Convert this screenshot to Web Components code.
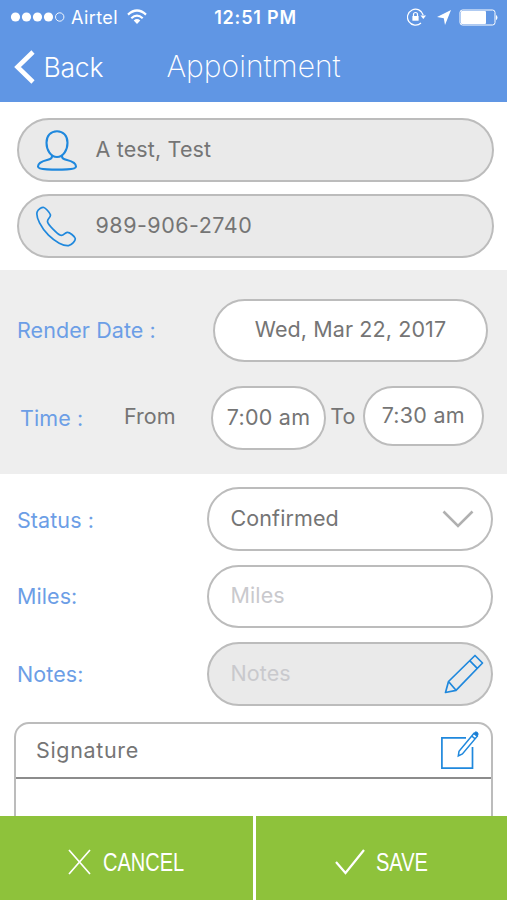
<!DOCTYPE html>
<html lang="en">
<head>
<meta charset="utf-8">
<title>Appointment</title>
<style>
  html, body { margin: 0; height: 100%; }
  body {
    overflow: hidden;
    font-family: Inter, "Liberation Sans", sans-serif;
    font-size: 21.5px;
    color: #757575;
    background: #fff;
  }
</style>
</head>
<body>
<appointment-page></appointment-page>

<script>
const icons = {
  person: `<svg width="42" height="42" viewBox="0 0 42 42" fill="none" stroke="#1f88dd" stroke-width="2.1" stroke-linejoin="round">
    <path d="M21 2.2C14.600 2.200 10.500 6.900 10.500 13.700C10.500 21 14.800 28 21 28C27.200 28 31.500 21 31.500 13.700C31.500 6.900 27.400 2.200 21 2.200Z"/>
    <path d="M16 26.400C16.400 29.700 14 30.300 11 31.100C5.800 32.400 2 34.200 2 37.600C2 39.300 4.800 40.200 11 40.400Q21 40.900 31 40.400C37.200 40.200 40 39.300 40 37.600C40 34.200 36.200 32.400 31 31.100C28 30.300 25.600 29.700 26 26.400"/></svg>`,
  phone: `<svg width="42" height="42" viewBox="0 0 42 42" fill="none" stroke="#1f88dd" stroke-width="1.7" stroke-linejoin="round">
    <path d="M1.200 6.700C2.200 4.200 5.600 2.100 7.900 2.500C9.500 2.800 13.300 7.300 14.300 9.500C15.600 12.400 10.700 13.600 11.600 17C12.400 20 21.500 29.200 24.600 30.200C27.600 31.100 28.500 27.700 31.200 27.300C33.600 27 38.700 31.400 39.200 33.400C39.700 35.600 35.800 40 32.600 40.600C27.900 41.400 19 36.700 12.500 30.200C5.500 23.200 -0.600 12.300 1.200 6.700Z"/></svg>`,
  chevron: `<svg width="32" height="20" viewBox="0 0 32 20" fill="none" stroke="#b0b0b0" stroke-width="2.600"><path d="M1.500 2.500L16 17L30.500 2.500"/></svg>`,
  pencil: `<svg width="40" height="40" viewBox="0 0 40 40" fill="none" stroke="#1f88dd" stroke-width="1.7" stroke-linejoin="round">
    <path d="M1.500 38.500L4.500 27.500L31 1.500L38.500 9L12 36.300L1.500 38.500ZM4.500 27.500L12 36.300M25.700 6.700L33.300 14.300"/></svg>`,
  compose: `<svg width="40" height="40" viewBox="0 0 40 40" fill="none" stroke="#1f88dd" stroke-width="1.700">
    <path d="M27 7.900H2.900V38.200H33.500V17"/>
    <path d="M34.800 3.500L20 21.300L19.300 26L23.400 23.900L38.300 6.200ZM32.700 6L36.200 8.800" stroke-width="1.500"/>
    <path d="M34.800 3.500Q36.500 1 38.300 2.300Q40 3.800 38.300 6.200Z" fill="#1f78cc" stroke-width="1"/></svg>`,
  back: `<svg width="22" height="34" viewBox="0 0 22 34" fill="none" stroke="#fff" stroke-width="4.600"><path d="M19 2L3.500 17L19 32"/></svg>`,
  cross: `<svg width="23" height="26" viewBox="0 0 23 26" fill="none" stroke="#fff" stroke-width="1.700"><path d="M1 1L22 25M22 1L1 25"/></svg>`,
  check: `<svg width="30" height="26" viewBox="0 0 30 26" fill="none" stroke="#fff" stroke-width="2.200"><path d="M1 13L10.500 24L29 1"/></svg>`
};

class UiIcon extends HTMLElement {
  connectedCallback() {
    this.attachShadow({ mode: 'open' });
    this.shadowRoot.innerHTML = `
      <style>
        :host { display: block; flex: none; }
        svg { display: block; }
      </style>
      ${icons[this.getAttribute('name')]}
    `;
  }
}

class StatusBar extends HTMLElement {
  connectedCallback() {
    this.attachShadow({ mode: 'open' });
    this.shadowRoot.innerHTML = `
      <style>
        :host {
          display: grid;
          grid-template-columns: 1fr auto 1fr;
          align-items: center;
          height: 34px;
          padding: 0 8px 0 10px;
          color: #fff;
          font-size: 18px;
        }
        .side { display: flex; align-items: center; }
        .right { justify-content: flex-end; }
        .carrier { margin: 0 9.500px 0 6px; letter-spacing: 0.4px; }
        .time { font-weight: 600; font-size: 18px; letter-spacing: 0.8px; padding-left: 2px; }
        svg { display: block; flex: none; }
      </style>
      <div class="side">
        <svg width="55" height="12" viewBox="0 0 55 12" fill="#fff">
          <circle cx="5.500" cy="6" r="4.600"/><circle cx="16.500" cy="6" r="4.600"/>
          <circle cx="27.500" cy="6" r="4.600"/><circle cx="38.500" cy="6" r="4.600"/>
          <circle cx="49.700" cy="6" r="4.200" fill="none" stroke="#fff" stroke-width="0.900"/>
        </svg>
        <span class="carrier">Airtel</span>
        <svg width="20" height="16" viewBox="0 0 20 16" fill="none" stroke="#fff" stroke-width="2.200">
          <path d="M1 5.600Q10 -2.600 19 5.600M4.300 9.200Q10 4 15.700 9.200"/>
          <path d="M6.700 11.500Q10 8.600 13.300 11.500L10 15Z" fill="#fff" stroke="none"/>
        </svg>
      </div>
      <span class="time">12:51 PM</span>
      <div class="side right">
        <svg width="19" height="18" viewBox="0 0 19 18" fill="none" stroke="#fff" stroke-width="1.200">
          <path d="M16.200 7A8 8 0 1 0 14 15"/>
          <path d="M13.500 7.500H19L16.300 11Z" fill="#fff" stroke="none"/>
          <rect x="5.400" y="8" width="6.200" height="4.700" fill="#fff" stroke="none"/>
          <path d="M6.500 8V6.500a2 2 0 0 1 4 0V8"/>
        </svg>
        <svg width="14" height="15" viewBox="0 0 14 15" fill="#fff" style="margin-left: 11px"><path d="M14 0L8 15L6.800 8.200L0 7Z"/></svg>
        <svg width="40" height="17" viewBox="0 0 40 17" fill="none" stroke="#fff" style="margin-left: 8px">
          <rect x="1" y="1" width="35" height="15" rx="2.500" stroke-width="1"/>
          <rect x="2" y="2" width="25" height="13" rx="1" fill="#fff" stroke="none"/>
          <path d="M37 5.700Q40 8.500 37 11.300Z" fill="#fff" stroke="none"/>
        </svg>
      </div>
    `;
  }
}

class NavBar extends HTMLElement {
  connectedCallback() {
    this.attachShadow({ mode: 'open' });
    this.shadowRoot.innerHTML = `
      <style>
        :host { display: block; height: 102px; background: #6096e4; color: #fff; }
        nav {
          display: grid;
          grid-template-columns: 1fr auto 1fr;
          align-items: center;
          height: 66px;
          padding: 0 14px;
        }
        .back { display: flex; align-items: center; gap: 7.500px; font-size: 26.5px; font-weight: 300; letter-spacing: -0.2px; }
        .title { font-size: 30px; font-weight: 200; padding-bottom: 3px; }
      </style>
      <status-bar></status-bar>
      <nav>
        <div class="back"><ui-icon name="back"></ui-icon><span>Back</span></div>
        <div class="title"><slot></slot></div>
      </nav>
    `;
  }
}

// rounded field; "filled" is the read-only grey look
class PillField extends HTMLElement {
  connectedCallback() {
    this.attachShadow({ mode: 'open' });
    this.shadowRoot.innerHTML = `
      <style>
        :host {
          display: flex;
          align-items: center;
          box-sizing: border-box;
          height: 63.5px;
          border: 2px solid #bcbcbc;
          border-radius: 32px;
          background: #fff;
          padding: 0 22px;
          white-space: nowrap;
        }
        :host([filled]) { background: #eaeaea; }
        :host([placeholder]) { color: #c9c9cd; }
        :host([center]) { justify-content: center; padding: 0; }
        .text { flex: 0 1 auto; padding-bottom: 2px; letter-spacing: var(--track, 0.1px); }
        :host(:not([center])) .text { flex: 1; }
      </style>
      <slot name="before"></slot>
      <span class="text"><slot></slot></span>
      <slot name="after"></slot>
    `;
  }
}

class FormRow extends HTMLElement {
  connectedCallback() {
    this.attachShadow({ mode: 'open' });
    this.shadowRoot.innerHTML = `
      <style>
        :host {
          display: grid;
          grid-template-columns: var(--label, 189.5px) 1fr;
          align-items: center;
        }
        label { color: #6c9ee6; white-space: nowrap; padding-top: var(--drop, 0px); letter-spacing: 0.08px; }
      </style>
      <label>${this.getAttribute('label')}</label>
      <slot></slot>
    `;
  }
}

class SignatureBox extends HTMLElement {
  connectedCallback() {
    this.attachShadow({ mode: 'open' });
    this.shadowRoot.innerHTML = `
      <style>
        :host {
          display: block;
          box-sizing: border-box;
          border: 2px solid #bcbcbc;
          border-radius: 15px;
          height: 200px;
        }
        header {
          display: flex;
          justify-content: space-between;
          align-items: center;
          box-sizing: border-box;
          height: 55px;
          padding: 0 12px 0 20px;
          border-bottom: 2px solid #8c8c8c;
        }
        span { letter-spacing: 0.65px; }
      </style>
      <header><span>Signature</span><ui-icon name="compose"></ui-icon></header>
    `;
  }
}

class ActionBar extends HTMLElement {
  connectedCallback() {
    this.attachShadow({ mode: 'open' });
    this.shadowRoot.innerHTML = `
      <style>
        :host {
          display: grid;
          grid-template-columns: 252.5px 1fr;
          gap: 3px;
          height: 84px;
          background: #fff;
        }
        button {
          display: flex;
          align-items: center;
          border: 0;
          padding: 7px 0 0 68px;
          background: #8ec23b;
          color: #fff;
          font: 25.5px "Liberation Sans", Arial, sans-serif;
        }
        button + button { padding-left: 79px; }
        span { margin: 1px 0 0 11.500px; transform: scaleX(0.785); transform-origin: left; }
      </style>
      <button><ui-icon name="cross"></ui-icon><span>CANCEL</span></button>
      <button><ui-icon name="check"></ui-icon><span>SAVE</span></button>
    `;
  }
}

class AppointmentPage extends HTMLElement {
  connectedCallback() {
    this.attachShadow({ mode: 'open' });
    this.shadowRoot.innerHTML = `
      <style>
        :host { display: flex; flex-direction: column; height: 900px; width: 507px; }
        main { flex: 1; min-height: 0; overflow: hidden; }
        .contact { display: grid; gap: 12.5px; padding: 16px 13px 12.5px 16.5px; }
        .contact pill-field { padding: 0 17px; --track: 0.15px; }
        .contact .phone { --track: 0.5px; }
        .contact ui-icon { margin-right: 18px; }
        .schedule { box-sizing: border-box; height: 204px; background: #eee; padding: 28.5px 19px 0 17px; }
        .schedule .date { --label: 196px; }
        .schedule .time { --label: 104px; margin: 24px 4px 0 3px; }
        .times {
          display: grid;
          grid-template-columns: 87px 115px 36.500px 1fr;
          align-items: start;
        }
        .times span { padding-top: 17px; }
        .times pill-field { --track: 0.25px; }
        .to { text-align: center; padding-right: 3px; }
        .short { height: 60px; }
        .details { display: grid; gap: 14px; padding: 13px 14.500px 16px 17px; }
        .status { --drop: 2px; }
        .status ui-icon { margin-right: -5px; }
        .notes ui-icon { margin-right: -15px; }
        signature-box { margin: 0 14.500px 0 14px; }
      </style>
      <nav-bar>Appointment</nav-bar>
      <main>
        <section class="contact">
          <pill-field filled><ui-icon slot="before" name="person"></ui-icon>A test, Test</pill-field>
          <pill-field filled class="phone"><ui-icon slot="before" name="phone"></ui-icon>989-906-2740</pill-field>
        </section>
        <section class="schedule">
          <form-row class="date" label="Render Date :"><pill-field center>Wed, Mar 22, 2017</pill-field></form-row>
          <form-row class="time" label="Time :">
            <div class="times">
              <span>From</span>
              <pill-field center>7:00 am</pill-field>
              <span class="to">To</span>
              <pill-field center class="short">7:30 am</pill-field>
            </div>
          </form-row>
        </section>
        <section class="details">
          <form-row class="status" label="Status :"><pill-field>Confirmed<ui-icon slot="after" name="chevron"></ui-icon></pill-field></form-row>
          <form-row label="Miles:"><pill-field placeholder>Miles</pill-field></form-row>
          <form-row label="Notes:"><pill-field filled placeholder class="notes">Notes<ui-icon slot="after" name="pencil"></ui-icon></pill-field></form-row>
        </section>
        <signature-box></signature-box>
      </main>
      <action-bar></action-bar>
    `;
  }
}

customElements.define('ui-icon', UiIcon);
customElements.define('status-bar', StatusBar);
customElements.define('nav-bar', NavBar);
customElements.define('pill-field', PillField);
customElements.define('form-row', FormRow);
customElements.define('signature-box', SignatureBox);
customElements.define('action-bar', ActionBar);
customElements.define('appointment-page', AppointmentPage);
</script>
</body>
</html>
